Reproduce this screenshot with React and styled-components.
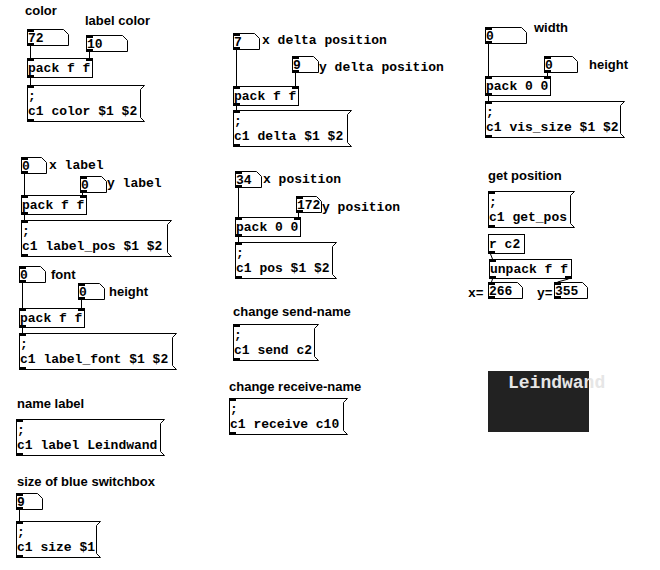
import React from 'react';
import styled, { createGlobalStyle } from 'styled-components';

const GlobalStyle = createGlobalStyle`
  html, body {
    margin: 0;
    padding: 0;
    background: #fff;
  }
`;

const Patch = styled.div`
  position: relative;
  width: 660px;
  height: 570px;
  background: #fff;
  overflow: hidden;
  font-family: "Liberation Mono", "Courier New", monospace;
  font-weight: bold;
  font-size: 13px;
  color: #000;
`;

const Wires = styled.svg`
  position: absolute;
  left: 0;
  top: 0;
  width: 660px;
  height: 570px;
  pointer-events: none;
`;

const Node = styled.div`
  position: absolute;
  left: ${p => p.$x}px;
  top: ${p => p.$y}px;
  width: ${p => p.$w}px;
  height: ${p => p.$h}px;
  box-sizing: border-box;
`;

const ObjectBox = styled(Node)`
  border: 1px solid #000;
  background: #fff;
`;

const Outline = styled.svg`
  position: absolute;
  left: 0;
  top: 0;
  overflow: visible;
`;

const BoxText = styled.div`
  position: absolute;
  left: ${p => p.$pad ?? 2}px;
  top: ${p => p.$top ?? 2}px;
  line-height: 15px;
  white-space: pre;
`;

const Port = styled.span`
  position: absolute;
  width: 7px;
  height: 3px;
  background: #000;
  ${p => (p.$right ? 'right: 0;' : 'left: 0;')}
  ${p => (p.$bottom ? 'bottom: 0;' : 'top: 0;')}
`;

const ObjectPort = styled(Port)`
  ${p => (p.$right ? 'right: -1px;' : 'left: -1px;')}
  ${p => (p.$bottom ? 'bottom: -1px;' : 'top: -1px;')}
`;

const Comment = styled.div`
  position: absolute;
  left: ${p => p.$x}px;
  top: ${p => p.$y}px;
  line-height: 15px;
  white-space: nowrap;
  font-family: ${p => (p.$mono ? '"Liberation Mono", "Courier New", monospace' : '"Liberation Sans", Arial, sans-serif')};
  font-size: 13px;
  font-weight: bold;
`;

const GraphCanvas = styled.div`
  position: absolute;
  left: 488px;
  top: 371px;
  width: 101px;
  height: 61px;
  background: #222;
`;

const CanvasLabel = styled.span`
  position: absolute;
  left: 20px;
  top: 3px;
  font-family: "Liberation Mono", "Courier New", monospace;
  font-size: 18px;
  line-height: 18px;
  font-weight: bold;
  color: #e6e6e6;
  white-space: nowrap;
`;

const NUMBERS = [
  { x: 27, y: 29, w: 42, v: '72' },
  { x: 86, y: 35, w: 42, v: '10' },
  { x: 233, y: 33, w: 27, v: '7' },
  { x: 292, y: 56, w: 27, v: '9' },
  { x: 485, y: 27, w: 42, v: '0' },
  { x: 544, y: 56, w: 34, v: '0' },
  { x: 21, y: 157, w: 26, v: '0' },
  { x: 80, y: 176, w: 27, v: '0' },
  { x: 19, y: 266, w: 27, v: '0' },
  { x: 78, y: 283, w: 27, v: '0' },
  { x: 235, y: 171, w: 27, v: '34' },
  { x: 296, y: 196, w: 26, v: '172' },
  { x: 488, y: 282, w: 35, v: '266' },
  { x: 554, y: 282, w: 34, v: '355' },
  { x: 16, y: 493, w: 27, v: '9' },
];

const OBJECTS = [
  { x: 27, y: 58, w: 66, t: 'pack f f', ins: 2, outs: 1 },
  { x: 233, y: 86, w: 66, t: 'pack f f', ins: 2, outs: 1 },
  { x: 485, y: 76, w: 66, t: 'pack 0 0', ins: 2, outs: 1 },
  { x: 21, y: 195, w: 66, t: 'pack f f', ins: 2, outs: 1 },
  { x: 19, y: 308, w: 66, t: 'pack f f', ins: 2, outs: 1 },
  { x: 235, y: 217, w: 66, t: 'pack 0 0', ins: 2, outs: 1 },
  { x: 488, y: 234, w: 37, t: 'r c2', ins: 0, outs: 1 },
  { x: 489, y: 259, w: 83, t: 'unpack f f', ins: 1, outs: 2 },
];

const MESSAGES = [
  { x: 27, y: 85, w: 118, t: 'c1 color $1 $2' },
  { x: 233, y: 110, w: 119, t: 'c1 delta $1 $2' },
  { x: 485, y: 101, w: 140, t: 'c1 vis_size $1 $2' },
  { x: 21, y: 220, w: 151, t: 'c1 label_pos $1 $2' },
  { x: 19, y: 333, w: 158, t: 'c1 label_font $1 $2' },
  { x: 235, y: 242, w: 102, t: 'c1 pos $1 $2' },
  { x: 233, y: 324, w: 86, t: 'c1 send c2' },
  { x: 229, y: 398, w: 119, t: 'c1 receive c10' },
  { x: 488, y: 191, w: 87, t: 'c1 get_pos' },
  { x: 16, y: 419, w: 149, t: 'c1 label Leindwand' },
  { x: 16, y: 521, w: 85, t: 'c1 size $1' },
];

const COMMENTS = [
  { x: 25, y: 3, t: 'color' },
  { x: 85, y: 13, t: 'label color' },
  { x: 534, y: 20, t: 'width' },
  { x: 589, y: 57, t: 'height' },
  { x: 51, y: 267, t: 'font' },
  { x: 109, y: 284, t: 'height' },
  { x: 233, y: 304, t: 'change send-name' },
  { x: 229, y: 379, t: 'change receive-name' },
  { x: 488, y: 168, t: 'get position' },
  { x: 17, y: 396, t: 'name label' },
  { x: 17, y: 474, t: 'size of blue switchbox' },
  { x: 262, y: 33, t: 'x delta position', mono: true },
  { x: 319, y: 60, t: 'y delta position', mono: true },
  { x: 49, y: 158, t: 'x label', mono: true },
  { x: 107, y: 176, t: 'y label', mono: true },
  { x: 263, y: 172, t: 'x position', mono: true },
  { x: 322, y: 200, t: 'y position', mono: true },
  { x: 468, y: 286, t: 'x=', mono: true },
  { x: 537, y: 286, t: 'y=', mono: true },
];

const CONNECTIONS = [
  [30, 46, 30, 58],
  [89, 52, 89, 58],
  [30, 78, 30, 85],
  [236, 50, 236, 86],
  [295, 73, 295, 86],
  [236, 106, 236, 110],
  [488, 44, 488, 76],
  [547, 73, 547, 76],
  [488, 96, 488, 101],
  [24, 174, 24, 195],
  [82, 193, 82, 195],
  [24, 215, 24, 220],
  [22, 283, 22, 308],
  [81, 300, 81, 308],
  [22, 328, 22, 333],
  [238, 188, 238, 217],
  [298, 213, 298, 217],
  [238, 237, 238, 242],
  [490, 254, 492, 259],
  [492, 279, 491, 282],
  [568, 279, 557, 282],
  [19, 510, 19, 521],
];

function NumberBox({ x, y, w, v }) {
  const h = 17;
  const pts = `0.5,0.5 ${w - 5.5},0.5 ${w - 0.5},5.5 ${w - 0.5},${h - 0.5} 0.5,${h - 0.5}`;
  return (
    <Node $x={x} $y={y} $w={w} $h={h}>
      <Outline width={w} height={h}>
        <polygon points={pts} fill="#fff" stroke="#000" strokeWidth="1" />
      </Outline>
      <Port />
      <Port $bottom />
      <BoxText $pad={1} $top={2}>{v}</BoxText>
    </Node>
  );
}

function MessageBox({ x, y, w, t }) {
  const h = 37;
  const e = w - 4.5;
  const pts = `0.5,0.5 ${w - 0.5},0.5 ${e},4.5 ${e},${h - 4.5} ${w - 0.5},${h - 0.5} 0.5,${h - 0.5}`;
  return (
    <Node $x={x} $y={y} $w={w} $h={h}>
      <Outline width={w} height={h}>
        <polygon points={pts} fill="#fff" stroke="#000" strokeWidth="1" />
      </Outline>
      <Port />
      <Port $bottom />
      <BoxText $pad={1} $top={4}>{';\n' + t}</BoxText>
    </Node>
  );
}

function PdObject({ x, y, w, t, ins, outs }) {
  return (
    <ObjectBox $x={x} $y={y} $w={w} $h={20}>
      {ins > 0 && <ObjectPort />}
      {ins > 1 && <ObjectPort $right />}
      {outs > 0 && <ObjectPort $bottom />}
      {outs > 1 && <ObjectPort $bottom $right />}
      <BoxText $pad={0} $top={2}>{t}</BoxText>
    </ObjectBox>
  );
}

export default function App() {
  return (
    <>
      <GlobalStyle />
      <Patch>
        <Wires viewBox="0 0 660 570">
          {CONNECTIONS.map(([x1, y1, x2, y2], i) => (
            <line key={i} x1={x1 + 0.5} y1={y1} x2={x2 + 0.5} y2={y2} stroke="#000" strokeWidth="1" />
          ))}
        </Wires>
        {COMMENTS.map((c, i) => (
          <Comment key={i} $x={c.x} $y={c.y} $mono={c.mono}>{c.t}</Comment>
        ))}
        {NUMBERS.map((n, i) => <NumberBox key={i} {...n} />)}
        {OBJECTS.map((o, i) => <PdObject key={i} {...o} />)}
        {MESSAGES.map((m, i) => <MessageBox key={i} {...m} />)}
        <GraphCanvas>
          <CanvasLabel>Leindwand</CanvasLabel>
        </GraphCanvas>
      </Patch>
    </>
  );
}
